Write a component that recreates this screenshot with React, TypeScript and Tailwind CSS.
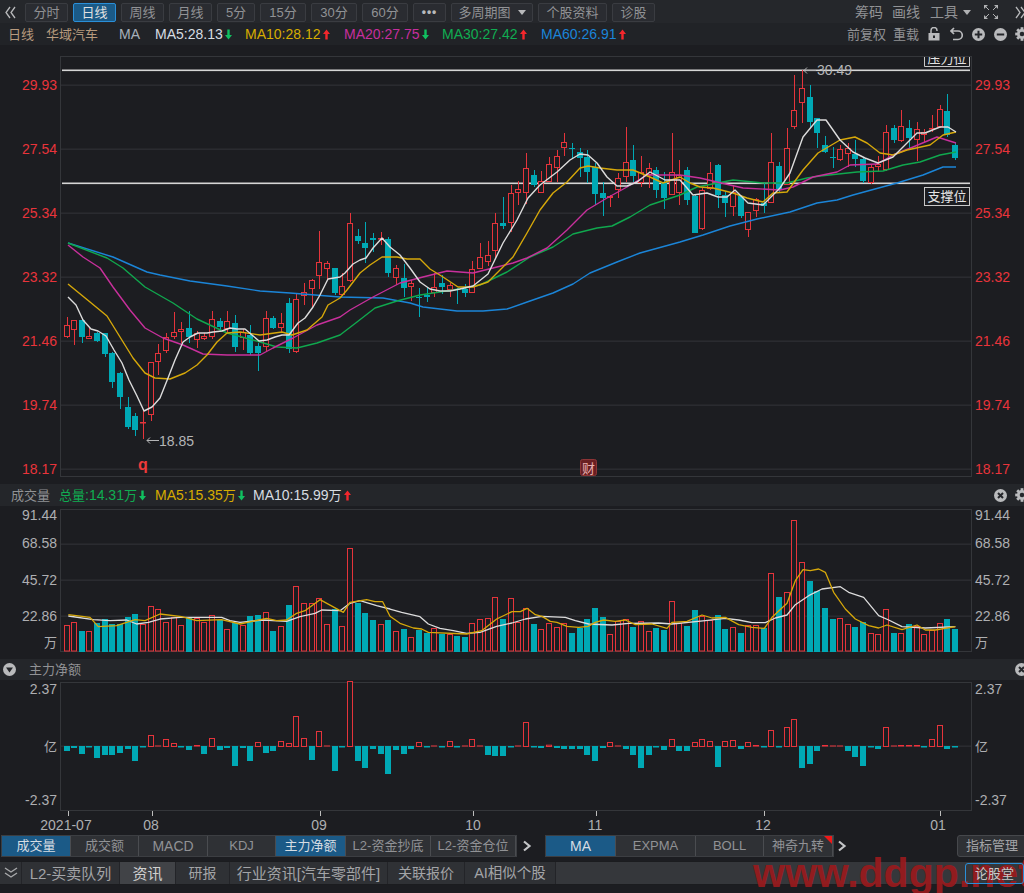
import React from "react";

const F = '"Liberation Sans","Noto Sans CJK SC",sans-serif';
const RED = "#e5343b";
const TEAL = "#00a9b5";
const X = (i: number) => Math.floor(67 + 7.66 * i);

type C = [number, number, number, number, number];
// top, bottom, high, low, 1=red 0=teal
const candles: C[] = [
[325,337,317,338,1],[320,330,320,345,1],[320,337,319,343,0],[336,339,327,339,1],[333,341,332,342,0],[333,354,333,357,0],[353,382,352,388,0],[373,397,372,409,0],[407,427,397,429,0],[416,430,413,436,0],
[422,423,410,439,1],[362,415,362,421,1],[353,362,344,375,1],[337,351,333,353,1],[332,337,312,339,1],[329,332,322,343,1],[328,337,311,343,0],[333,340,331,348,1],[336,339,333,340,1],[319,337,311,339,1],
[321,327,318,331,0],[321,329,311,334,1],[323,347,315,352,0],[332,338,329,350,1],[335,353,325,355,0],[346,353,343,371,0],[318,347,311,351,1],[318,328,316,329,0],[323,328,313,333,1],[303,349,298,353,0],
[299,352,293,353,1],[292,296,283,305,1],[280,289,279,308,1],[262,276,231,289,1],[263,269,261,280,1],[268,293,268,295,0],
[286,295,273,296,1],[223,281,213,282,1],[236,241,229,244,0],[243,248,222,263,0],[238,240,233,252,0],[238,239,232,245,1],[239,273,237,277,0],[268,278,265,285,1],[278,288,264,297,0],[283,287,280,301,1],
[297,298,288,317,0],[295,297,287,302,0],[287,293,273,297,1],[283,287,275,294,0],[285,290,283,297,1],[289,290,288,304,0],[289,293,284,297,0],[269,293,261,293,1],[257,269,243,269,1],[255,262,241,266,1],
[223,251,213,258,1],[223,226,197,229,0],[193,223,185,232,1],[189,193,181,205,1],[168,193,153,204,1],[175,185,170,187,0],[181,193,171,193,1],[164,182,157,182,1],[156,168,150,182,1],[142,148,133,156,1],
[148,149,143,159,0],[152,158,148,177,0],[157,172,150,183,0],[167,194,163,205,0],[193,198,182,216,0],[196,198,195,207,1],[178,190,173,198,1],[162,177,127,182,1],[160,176,145,182,0],[172,183,156,187,1],
[168,175,163,188,1],[170,190,167,198,0],[183,198,172,209,0],[172,195,133,195,1],[175,193,160,205,1],
[170,200,167,205,0],[196,233,195,233,0],[190,229,188,230,1],[173,189,162,190,1],[165,195,164,208,0],[195,203,192,217,0],[192,207,185,216,1],[196,216,195,218,0],[212,230,212,237,1],[199,211,198,217,1],
[203,206,183,213,0],[162,203,133,203,1],[166,190,162,192,0],[148,185,128,185,1],[110,127,75,129,1],[88,103,70,123,1],[97,122,85,127,0],[118,133,118,148,0],[145,152,136,153,0],[157,158,147,168,0],
[149,160,145,161,1],[148,154,143,167,1],[154,159,140,167,0],[159,181,157,183,0],[167,183,165,184,1],[164,167,156,172,1],[132,170,125,171,1],[128,140,125,143,0],[126,141,110,142,1],[128,138,120,149,0],
[129,140,122,161,1],[132,135,129,142,1],[128,129,115,132,1],[109,127,105,128,1],[111,135,94,137,0],[145,158,143,160,0],
];

const ma5 = "68,297 76,305 83,320 91,329 98,331 106,336 114,350 122,363 129,380 137,396 144,411 152,407 160,398 168,378 175,360 183,342 190,337 198,333 207,333 213,332 222,331 230,328 237,329 245,329 252,335 259,341 267,340 275,337 282,335 289,335 298,323 305,318 313,307 320,295 328,279 340,277 345,273 353,264 360,260 366,258 373,248 382,238 390,247 400,255 410,268 420,282 430,289 440,291 450,291 460,289 473,286 488,274 503,243 517,220 528,198 540,185 557,172 570,160 580,154 588,155 597,163 607,177 617,186 627,186 637,182 650,172 665,180 680,180 687,188 693,195 707,193 718,197 727,197 735,190 748,203 763,205 780,188 790,173 803,137 817,120 826,120 840,140 853,152 865,158 878,163 893,157 903,147 917,133 925,133 940,127 948,127 956,132";
const ma10 = "68,284 90,302 107,316 120,337 133,358 145,373 155,378 170,379 185,373 197,365 207,355 217,342 227,333 240,332 260,335 282,332 292,335 307,330 322,317 328,305 340,298 347,290 360,273 370,265 382,257 397,257 407,259 420,259 430,269 443,277 458,287 473,287 488,282 500,270 513,257 527,233 540,210 553,193 567,182 580,168 588,166 600,168 617,170 633,170 650,177 663,183 680,177 690,183 700,187 713,188 733,193 747,198 763,202 773,193 787,192 803,170 818,153 840,140 855,137 867,143 880,153 893,155 907,150 930,145 943,135 956,132";
const ma20 = "68,245 83,257 100,268 113,287 130,310 145,328 163,338 183,345 203,354 227,355 260,355 273,348 293,338 317,325 340,317 350,310 373,297 400,283 423,277 447,271 473,273 497,267 513,263 527,258 547,248 567,230 587,210 607,198 627,187 647,175 680,175 700,178 717,182 743,188 780,190 793,187 813,177 837,172 850,165 877,164 893,155 913,147 937,137 956,143";
const ma30 = "68,243 107,258 123,268 145,287 173,303 197,319 227,333 253,340 277,347 297,348 317,343 340,335 357,322 375,308 397,301 420,295 453,290 480,285 507,272 530,257 553,247 573,234 597,228 612,226 630,217 650,205 680,195 697,187 733,180 763,183 787,183 807,178 820,176 857,172 883,171 903,165 920,162 940,155 956,152";
const ma60 = "68,243 113,257 147,272 160,275 190,281 227,286 260,291 290,293 340,297 383,298 410,303 423,307 457,311 483,311 507,309 530,301 553,293 573,284 590,273 617,262 640,253 680,242 703,235 730,226 757,219 790,212 817,203 837,200 853,195 897,183 923,175 943,167 956,167";

// signed heights of the volume bars (positive = red, negative = teal)
const vols = [26,29,-21,20,-29,-33,-28,-28,-35,-38,27,45,42,29,34,26,-34,33,29,36,-32,22,-29,26,-36,-37,39,-21,25,-47,65,48,48,53,27,-43,25,103,-49,-39,-32,27,-32,20,-23,14,-22,-19,23,-18,17,-16,-15,28,32,33,54,-33,53,29,43,-28,22,28,24,28,-19,-24,-33,-44,-35,17,30,32,-25,30,20,-24,-22,50,28,-26,-42,35,31,-37,-23,24,-19,26,26,-24,78,-55,59,131,89,-71,-61,-44,-33,33,27,-25,-30,18,17,42,-19,18,-28,25,17,21,28,-33,-23];

const zv = (pts: number[][], ox: number) => pts.map(([x, y]) => `${ox + x / 3},${485 + y / 3}`).join(" ");
const vma5 = zv([[205,392],[270,400],[295,428],[350,425],[405,407],[435,410],[480,390],[545,398],[590,410],[665,407],[720,420],[800,403],[830,410],[860,408],[890,388],[915,380],[960,347],[1030,385],[1050,355],[1100,347],[1125,353],[1148,353],[1170,397],[1200,418],[1240,432],[1265,435],[1285,445],[1400,450],[1445,440],[1490,405],[1536,383]],0) + " " + zv([[25,383],[45,373],[70,392],[90,397],[115,412],[135,415],[165,427],[200,430],[228,427],[250,415],[275,408],[310,412],[340,408],[370,422],[420,420],[465,433],[480,415],[525,412],[570,393],[600,402],[640,400],[680,422],[720,430],[757,433],[780,400],[825,358],[850,290],[873,257],[895,260],[920,255],[940,265],[965,325],[1000,375],[1030,405],[1070,425],[1100,432],[1125,423],[1170,437],[1215,423],[1240,438],[1270,438],[1330,428]],512);
const vma10 = zv([[205,396],[280,407],[330,410],[380,408],[410,420],[445,415],[480,405],[540,400],[600,400],[665,400],[690,410],[720,415],[790,408],[860,412],[900,398],[945,388],[965,378],[1020,380],[1050,358],[1080,350],[1130,365],[1170,375],[1205,385],[1260,398],[1285,420],[1320,433],[1360,440],[1400,448],[1440,445],[1490,427],[1536,417]],0) + " " + zv([[40,405],[90,397],[160,400],[190,410],[230,420],[300,423],[350,418],[440,417],[480,420],[580,410],[640,403],[680,408],[720,416],[760,416],[790,402],[825,393],[850,362],[890,335],[930,315],[985,308],[1010,325],[1055,340],[1100,395],[1130,408],[1170,428],[1240,432],[1330,428]],512);

// net flow: signed pixels around the zero line
const net = [-5,-2,-8,-1,-12,-9,-9,-7,-3,-15,-1,11,0.7,7,3,-1,-4,0.01,-8,8,-4,-2,-20,-2,-15,4,-7,-5,5,3,30,8,-14,15,0.7,-25,-1,65,-15,-22,-3,-8,-28,-4,-8,-3,4,-1,0.7,-1,5,-1,0.7,7,0.7,-9,-10,-10,-1,0.7,24,-1,-2,1.3,-2,-3,-3,-3,-9,-15,-2,4,0.7,-3,-9,-22,-9,-1,-4,7,-5,-5,4,7,5,-21,5,6,-3,4,0.01,-1,16,-1,19,27,-22,-18,-5,0.01,0.7,0.7,-5,-11,-20,-1,-3,19,0.7,0.01,0.01,0.01,-1,7,21,-3,-1];

function Up() {
  return (
    <svg width="7" height="11" viewBox="0 0 7 11" className="ml-[2px] shrink-0">
      <path d="M3.5 0.5 L7 5 H4.7 V10.5 H2.3 V5 H0 Z" fill="#f5272c" />
    </svg>
  );
}
function Down() {
  return (
    <svg width="7" height="11" viewBox="0 0 7 11" className="ml-[2px] shrink-0">
      <path d="M3.5 10.5 L7 6 H4.7 V0.5 H2.3 V6 H0 Z" fill="#10c060" />
    </svg>
  );
}

function Btn({ w, active, children }: { w: number; active?: boolean; children: React.ReactNode }) {
  return (
    <div
      style={{ width: w }}
      className={
        "h-[19px] shrink-0 flex items-center justify-center text-[13px] rounded-[2px] border " +
        (active ? "bg-[#1b5a87] border-[#2a8fd8] text-[#e0e0e0]" : "bg-[#2a2c31] border-[#3a3c41] text-[#919295]")
      }
    >
      {children}
    </div>
  );
}

function CircleIcon({ kind }: { kind: "plus" | "minus" | "x" | "down" }) {
  return (
    <svg width="13" height="13" viewBox="0 0 13 13" className="shrink-0">
      <circle cx="6.5" cy="6.5" r="6.5" fill="#b9babc" />
      {kind === "plus" && <path d="M2.8 6.5H10.2M6.5 2.8V10.2" stroke="#24262a" strokeWidth="2" />}
      {kind === "minus" && <path d="M2.8 6.5H10.2" stroke="#24262a" strokeWidth="2" />}
      {kind === "x" && <path d="M4 4L9 9M9 4L4 9" stroke="#24262a" strokeWidth="2" />}
      {kind === "down" && <path d="M3 4.5H10L6.5 9.5Z" fill="#24262a" />}
    </svg>
  );
}

function Gear() {
  return (
    <svg width="14" height="14" viewBox="0 0 14 14" className="shrink-0">
      <circle cx="7" cy="7" r="5" fill="#b9babc" />
      {[0, 45, 90, 135].map((a) => (
        <rect key={a} x="5.6" y="0.2" width="2.8" height="13.6" fill="#b9babc" transform={`rotate(${a} 7 7)`} />
      ))}
      <circle cx="7" cy="7" r="2.3" fill="#24262a" />
    </svg>
  );
}

function Arrow({ color = "#c4c5c7" }: { color?: string }) {
  return (
    <svg width="10" height="12" viewBox="0 0 10 12" className="shrink-0">
      <path d="M2 1.5 L7.5 6 L2 10.5" fill="none" stroke={color} strokeWidth="2.2" />
    </svg>
  );
}

function Tab({ w, active, big, children, flag }: { w: number; active?: boolean; big?: boolean; children: React.ReactNode; flag?: boolean }) {
  return (
    <div
      style={{ width: w }}
      className={
        "relative h-full shrink-0 flex items-center justify-center border-r border-[#4a4c50] " +
        (big ? "text-[14px] " : "text-[13px] ") +
        (active ? "bg-[#1b5a87] text-[#d6dde3]" : "bg-[#2f3135] text-[#919295]")
      }
    >
      {children}
      {flag && <span className="absolute top-0 right-0 w-0 h-0 border-t-[8px] border-l-[8px] border-t-[#f01818] border-l-transparent" />}
    </div>
  );
}

function BTab({ w, active, size = "text-[14px]", children }: { w: number; active?: boolean; size?: string; children: React.ReactNode }) {
  return (
    <div
      style={{ width: w }}
      className={
        "h-full shrink-0 flex items-center justify-center border-r border-[#232428] " +
        size +
        " " +
        (active ? "bg-[#414347] text-[#d0d0d0]" : "bg-[#2f3135] text-[#a3a4a7]")
      }
    >
      {children}
    </div>
  );
}

function MainChart() {
  const grids = [85, 149, 213, 277, 341, 405, 469];
  const labels = ["29.93", "27.54", "25.34", "23.32", "21.46", "19.74", "18.17"];
  return (
    <svg viewBox="0 45 1024 440" width="1024" height="440" className="block" style={{ fontFamily: F }}>
      <rect x="60.5" y="56.5" width="911" height="420" fill="none" stroke="#34363a" />
      {grids.map((y) => (
        <rect key={y} x="61" y={y - 0.5} width="910" height="1.4" fill="#2d2e32" />
      ))}
      {grids.map((y, i) => (
        <g key={y} fill="#e9343b" fontSize="14">
          <text x="57" y={y + 5} textAnchor="end">{labels[i]}</text>
          <text x="975" y={y + 5}>{labels[i]}</text>
        </g>
      ))}
      <rect x="62" y="69.5" width="908" height="1.6" fill="#d6d6d6" />
      <rect x="62" y="182.5" width="908" height="1.6" fill="#d6d6d6" />
      {candles.map(([t, b, h, l, r], i) => {
        const x = X(i);
        if (r)
          return (
            <g key={i}>
              {h < t && <rect x={x} y={h} width="1" height={t - h} fill={RED} />}
              {l > b && <rect x={x} y={b} width="1" height={l - b} fill={RED} />}
              <rect x={x - 2.5} y={t + 0.5} width="5" height={Math.max(b - t - 1, 0.5)} fill="#1c1d21" stroke={RED} />
            </g>
          );
        return (
          <g key={i}>
            <rect x={x} y={h} width="1" height={l - h} fill={TEAL} />
            <rect x={x - 3} y={t} width="6" height={b - t} fill={TEAL} />
          </g>
        );
      })}
      <polyline points={ma60} fill="none" stroke="#1b85d8" strokeWidth="1.4" strokeLinejoin="round" />
      <polyline points={ma30} fill="none" stroke="#10a84e" strokeWidth="1.4" strokeLinejoin="round" />
      <polyline points={ma20} fill="none" stroke="#c8309c" strokeWidth="1.4" strokeLinejoin="round" />
      <polyline points={ma10} fill="none" stroke="#d6a80a" strokeWidth="1.4" strokeLinejoin="round" />
      <polyline points={ma5} fill="none" stroke="#dcdcdc" strokeWidth="1.4" strokeLinejoin="round" />

      <g stroke="#b4b5b7" fill="none" strokeWidth="1">
        <path d="M147 440.5H159M150 437.5L147 440.5L150 443.5" />
        <path d="M804 70.5H816M807 67.5L804 70.5L807 73.5" />
      </g>
      <text x="159" y="446" fontSize="14" fill="#b4b5b7">18.85</text>
      <text x="817" y="75" fontSize="14" fill="#b4b5b7">30.49</text>

      <text x="143" y="470" fontSize="16" fontWeight="700" fill="#ee3a3a" textAnchor="middle">q</text>
      <rect x="580.5" y="459.5" width="16" height="16" rx="2" fill="#6a1f22" stroke="#8c3436" />
      <text x="588.5" y="472.5" fontSize="13" fill="#e8b0b0" textAnchor="middle">财</text>

      <path d="M924.5 57V66.5H969.5V57" fill="#1c1d21" stroke="#c8c8c8" />
      <clipPath id="pl"><rect x="925" y="57" width="44" height="9" /></clipPath>
      <text x="947" y="63" fontSize="13" fill="#e4e4e4" textAnchor="middle" clipPath="url(#pl)">压力位</text>
      <rect x="924.5" y="187.5" width="45" height="18" fill="#1c1d21" stroke="#c8c8c8" />
      <text x="947" y="201" fontSize="13" fill="#e4e4e4" textAnchor="middle">支撑位</text>
    </svg>
  );
}

function VolChart() {
  const grid = [545, 581, 617];
  const g = "#aeafb2";
  return (
    <svg viewBox="0 507 1024 153" width="1024" height="153" className="block" style={{ fontFamily: F }}>
      <rect x="60.5" y="510.5" width="911" height="142" fill="none" stroke="#34363a" />
      {grid.map((y) => (
        <rect key={y} x="61" y={y - 0.5} width="910" height="1.4" fill="#2d2e32" />
      ))}
      {[[521, "91.44"], [549, "68.58"], [586, "45.72"], [622, "22.86"]].map(([y, t]) => (
        <g key={t as string} fill={g} fontSize="14">
          <text x="57" y={y as number} textAnchor="end">{t}</text>
          <text x="975" y={y as number}>{t}</text>
        </g>
      ))}
      <text x="44" y="648" fontSize="13" fill={g}>万</text>
      <text x="975" y="648" fontSize="13" fill={g}>万</text>
      {vols.map((v, i) => {
        const x = X(i);
        const h = Math.abs(v);
        return v > 0 ? (
          <rect key={i} x={x - 2.5} y={652.5 - h} width="5" height={h - 0.5} fill="#1c1d21" stroke={RED} />
        ) : (
          <rect key={i} x={x - 3} y={653 - h} width="6" height={h} fill={TEAL} />
        );
      })}
      <polyline points={vma10} fill="none" stroke="#dcdcdc" strokeWidth="1.3" strokeLinejoin="round" />
      <polyline points={vma5} fill="none" stroke="#d6a80a" strokeWidth="1.3" strokeLinejoin="round" />
    </svg>
  );
}

function NetChart() {
  const g = "#aeafb2";
  const ticks: [number, string, number][] = [[68, "2021-07", 66], [152, "08", 151], [320, "09", 319], [473, "10", 473], [596, "11", 595], [764, "12", 763], [940, "01", 938]];
  return (
    <svg viewBox="0 681 1024 153" width="1024" height="153" className="block" style={{ fontFamily: F }}>
      <rect x="60.5" y="683.5" width="911" height="128" fill="none" stroke="#34363a" />
      <rect x="61" y="746.5" width="910" height="1.4" fill="#2d2e32" />
      <g fill={g} fontSize="14">
        <text x="57" y="695" textAnchor="end">2.37</text>
        <text x="975" y="695">2.37</text>
        <text x="44" y="752" fontSize="13">亿</text>
        <text x="975" y="752" fontSize="13">亿</text>
        <text x="57" y="806" textAnchor="end">-2.37</text>
        <text x="975" y="806">-2.37</text>
      </g>
      {net.map((v, i) => {
        const x = X(i);
        if (v < 0) return <rect key={i} x={x - 3} y="747" width="6" height={Math.max(-v, 1.5)} fill={TEAL} />;
        if (v < 0.5) return <rect key={i} x={x - 3} y="746" width="6" height="1.5" fill="#f0303a" />;
        if (v < 1) return <rect key={i} x={x - 3} y="746.5" width="6" height="1" fill={RED} />;
        return <rect key={i} x={x - 2.5} y={747.5 - v} width="5" height={v} fill="#1c1d21" stroke={RED} />;
      })}
      {ticks.map(([x, t, tx]) => (
        <g key={t}>
          <rect x={x} y="812" width="1" height="5" fill="#bdbdbd" />
          <text x={tx} y="831" fontSize="14" fill={g} textAnchor="middle">{t}</text>
        </g>
      ))}
    </svg>
  );
}

const Z = ({ children }: { children: React.ReactNode }) => <span className="text-[13px]">{children}</span>;

export default function App() {
  return (
    <div className="relative w-[1024px] h-[893px] overflow-hidden bg-[#1c1d21] text-[14px] leading-none" style={{ fontFamily: F }}>
      {/* top toolbar */}
      <div className="h-[23px] bg-[#25272b] flex items-center pt-[1px]">
        <div className="w-[25px] shrink-0 pl-[5px]">
          <svg width="11" height="13" viewBox="0 0 11 13"><path d="M5 1L1 6.5L5 12M10 1L6 6.5L10 12" fill="none" stroke="#b8b9bb" strokeWidth="1.3" /></svg>
        </div>
        <div className="flex items-center gap-[5px] shrink-0">
          <Btn w={43}>分时</Btn>
          <Btn w={43} active>日线</Btn>
          <Btn w={43}>周线</Btn>
          <Btn w={43}>月线</Btn>
          <Btn w={38}>5分</Btn>
          <Btn w={46}>15分</Btn>
          <Btn w={46}>30分</Btn>
          <Btn w={46}>60分</Btn>
          <Btn w={33}><span className="font-bold tracking-[1px] text-[#b8b9bb] text-[12px]">•••</span></Btn>
          <Btn w={82}>
            <span>多周期图</span>
            <span className="ml-[7px] w-0 h-0 border-x-[4px] border-x-transparent border-t-[5px] border-t-[#b8b9bb]" />
          </Btn>
          <Btn w={69}>个股资料</Btn>
          <Btn w={43}>诊股</Btn>
        </div>
        <div className="ml-[200px] flex items-center shrink-0 text-[#919295] text-[14px]">
          <span className="w-[37px] shrink-0">筹码</span>
          <span className="w-[38px] shrink-0">画线</span>
          <span className="shrink-0">工具</span>
          <span className="ml-[5px] shrink-0 w-0 h-0 border-x-[4px] border-x-transparent border-t-[5px] border-t-[#b0b1b3]" />
          <svg width="16" height="16" viewBox="0 0 16 16" className="ml-[12px] shrink-0">
            <path d="M1 1H5L1 5ZM15 1H11L15 5ZM1 15H5L1 11ZM15 15H11L15 11Z" fill="#b0b1b3" />
            <path d="M2 2L6 6M14 2L10 6M2 14L6 10M14 14L10 10" stroke="#b0b1b3" strokeWidth="1" />
          </svg>
          <svg width="10" height="13" viewBox="0 0 10 13" className="ml-[16px] shrink-0"><path d="M1 1L5 6.5L1 12M6 1L10 6.5L6 12" fill="none" stroke="#b8b9bb" strokeWidth="1.3" /></svg>
        </div>
      </div>

      {/* legend row */}
      <div className="h-[22px] bg-[#212327] flex items-center pl-[8px] whitespace-nowrap">
        <span className="w-[38px] shrink-0 text-[13px] text-[#b79a7e]">日线</span>
        <span className="w-[73px] shrink-0 text-[13px] text-[#b79a7e]">华域汽车</span>
        <span className="w-[36px] shrink-0 text-[#a6b0ba]">MA</span>
        <span className="flex items-center w-[90px] shrink-0 text-[#d7dde2]">MA5:28.13<Down /></span>
        <span className="flex items-center w-[99px] shrink-0 text-[#d6ac00]">MA10:28.12<Up /></span>
        <span className="flex items-center w-[98px] shrink-0 text-[#c62f9e]">MA20:27.75<Down /></span>
        <span className="flex items-center w-[99px] shrink-0 text-[#10ad52]">MA30:27.42<Up /></span>
        <span className="flex items-center w-[306px] shrink-0 text-[#1b85d8]">MA60:26.91<Up /></span>
        <span className="w-[46px] shrink-0 text-[13px] text-[#919295]">前复权</span>
        <span className="w-[35px] shrink-0 text-[13px] text-[#919295]">重载</span>
        <svg width="12" height="14" viewBox="0 0 12 14" className="shrink-0">
          <path d="M3 6V3.5a3 3 0 0 1 6 0V4" fill="none" stroke="#b9babc" strokeWidth="1.5" />
          <path d="M0.5 6H11.5V13.5H0.5ZM5 8.5V11H7V8.5Z" fill="#b9babc" fillRule="evenodd" />
        </svg>
        <svg width="13" height="14" viewBox="0 0 13 14" className="ml-[10px] shrink-0">
          <path d="M4 1L1 4L4 7M1.5 4H8a4 4 0 0 1 0 8.5H3" fill="none" stroke="#b9babc" strokeWidth="1.7" />
        </svg>
        <span className="ml-[9px] shrink-0"><CircleIcon kind="plus" /></span>
        <span className="ml-[9px] shrink-0"><CircleIcon kind="minus" /></span>
        <span className="ml-[8px] shrink-0"><Gear /></span>
      </div>

      <MainChart />

      {/* volume header */}
      <div className="h-[22px] -mt-[1px] bg-[#24262a] flex items-center pl-[11px] whitespace-nowrap">
        <span className="w-[48px] shrink-0 text-[13px] text-[#919295]">成交量</span>
        <span className="flex items-center w-[96px] shrink-0 text-[#10ad52]"><Z>总量</Z>:14.31<Z>万</Z><Down /></span>
        <span className="flex items-center w-[98px] shrink-0 text-[#d6ac00]">MA5:15.35<Z>万</Z><Down /></span>
        <span className="flex items-center w-[741px] shrink-0 text-[#d7dde2]">MA10:15.99<Z>万</Z><Up /></span>
        <span className="shrink-0"><CircleIcon kind="x" /></span>
        <span className="ml-[8px] shrink-0"><Gear /></span>
      </div>
      <VolChart />

      {/* net flow header */}
      <div className="h-[21px] bg-[#24262a] flex items-center pl-[3px] whitespace-nowrap">
        <CircleIcon kind="down" />
        <span className="ml-[13px] w-[986px] shrink-0 text-[13px] text-[#919295]">主力净额</span>
        <span className="shrink-0"><CircleIcon kind="x" /></span>
      </div>
      <NetChart />

      {/* indicator tabs */}
      <div className="h-[23px] mt-[1px] flex items-center pl-[1px]">
        <div className="h-[22px] flex border border-[#3c3e42] shrink-0">
          <Tab w={69} active>成交量</Tab>
          <Tab w={68}>成交额</Tab>
          <Tab w={69} big>MACD</Tab>
          <Tab w={68}>KDJ</Tab>
          <Tab w={70} active>主力净额</Tab>
          <Tab w={85}>L2-资金抄底</Tab>
          <Tab w={85}>L2-资金仓位</Tab>
        </div>
        <span className="ml-[5px] shrink-0"><Arrow /></span>
        <div className="ml-[13px] h-[22px] flex border border-[#3c3e42] shrink-0">
          <Tab w={70} active big>MA</Tab>
          <Tab w={80}>EXPMA</Tab>
          <Tab w={68}>BOLL</Tab>
          <Tab w={69} flag>神奇九转</Tab>
        </div>
        <span className="ml-[3px] shrink-0"><Arrow /></span>
        <div className="ml-[110px] h-[22px] w-[70px] shrink-0 flex items-center justify-center bg-[#2f3135] border border-[#46484c] rounded-[3px] text-[13px] text-[#a3a4a7]">指标管理</div>
      </div>

      {/* bottom tabs */}
      <div className="h-[24px] mt-[4px] bg-[#35373b] flex items-center border-y border-[#1b1c1f]">
        <BTab w={22}>
          <svg width="14" height="12" viewBox="0 0 14 12"><path d="M1 1L7 5L13 1M1 6L7 10L13 6" fill="none" stroke="#a8a9ab" strokeWidth="1.4" /></svg>
        </BTab>
        <BTab w={98} size="text-[15px]">L2-买卖队列</BTab>
        <BTab w={56} active size="text-[15px]">资讯</BTab>
        <BTab w={54}>研报</BTab>
        <BTab w={158} size="text-[15px]">行业资讯[汽车零部件]</BTab>
        <BTab w={77}>关联报价</BTab>
        <BTab w={91} size="text-[14.5px]">AI相似个股</BTab>
        <div className="relative z-10 ml-auto h-[21px] w-[59px] shrink-0 flex items-center justify-center rounded-[3px] border border-[#2a8fd8] text-[13px] text-[#c8c8c8]">论股堂</div>
      </div>

      {/* watermark */}
      <div
        className="absolute left-[753px] top-[857px] text-[41px] leading-[32px] font-bold whitespace-nowrap pointer-events-none text-[#9c1a1d] opacity-90"
        style={{ fontFamily: '"Liberation Sans",sans-serif' }}
      >
        www.ddgp.net
      </div>
    </div>
  );
}
